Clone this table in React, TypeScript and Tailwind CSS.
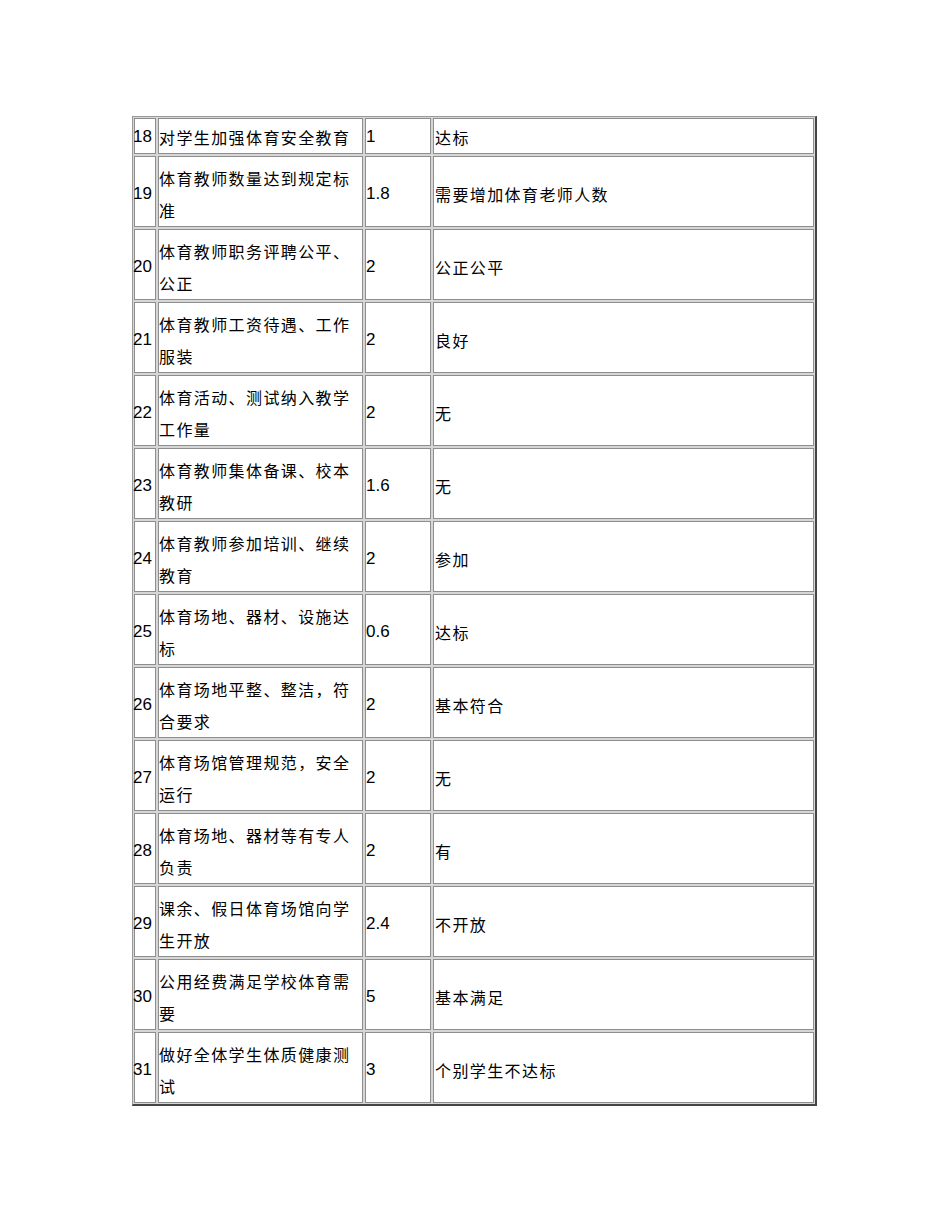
import React from "react";

type Row = { n: string; a: string[]; s: string; r: string };

const rows: Row[] = [
  { n: "18", a: ["对学生加强体育安全教育"], s: "1", r: "达标" },
  { n: "19", a: ["体育教师数量达到规定标", "准"], s: "1.8", r: "需要增加体育老师人数" },
  { n: "20", a: ["体育教师职务评聘公平、", "公正"], s: "2", r: "公正公平" },
  { n: "21", a: ["体育教师工资待遇、工作", "服装"], s: "2", r: "良好" },
  { n: "22", a: ["体育活动、测试纳入教学", "工作量"], s: "2", r: "无" },
  { n: "23", a: ["体育教师集体备课、校本", "教研"], s: "1.6", r: "无" },
  { n: "24", a: ["体育教师参加培训、继续", "教育"], s: "2", r: "参加" },
  { n: "25", a: ["体育场地、器材、设施达", "标"], s: "0.6", r: "达标" },
  { n: "26", a: ["体育场地平整、整洁，符", "合要求"], s: "2", r: "基本符合" },
  { n: "27", a: ["体育场馆管理规范，安全", "运行"], s: "2", r: "无" },
  { n: "28", a: ["体育场地、器材等有专人", "负责"], s: "2", r: "有" },
  { n: "29", a: ["课余、假日体育场馆向学", "生开放"], s: "2.4", r: "不开放" },
  { n: "30", a: ["公用经费满足学校体育需", "要"], s: "5", r: "基本满足" },
  { n: "31", a: ["做好全体学生体质健康测", "试"], s: "3", r: "个别学生不达标" },
];

const num = { fontFamily: '"Liberation Sans", Arial, sans-serif' };
const cjk = { fontFamily: '"Noto Sans CJK SC", "Noto Sans", sans-serif' };

export default function App() {
  return (
    <div className="w-[950px] min-h-[1230px] bg-white pt-[116px] pl-[132px] text-black">
      <div className="w-[685px] border-t border-l border-t-[#9a9a9a] border-l-[#9a9a9a] border-r-2 border-b-2 border-r-[#454545] border-b-[#454545] bg-[#d6d6d6] p-[1px]">
        <div className="grid grid-cols-[22px_205px_66px_381px] grid-rows-[36px_repeat(13,71px)] gap-[2px]">
          {rows.map((row, idx) => {
            const cell =
              "border border-[#8e8e8e] bg-white flex items-center " +
              (idx === 0 ? "pt-[2px]" : "pt-[5px]");
            return (
              <React.Fragment key={row.n}>
                <div className={cell + " text-[17px]"} style={num}>
                  <span className="-ml-[2px]">{row.n}</span>
                </div>
                <div className={cell + " text-[16px] tracking-[1.4px] leading-[32px]"} style={cjk}>
                  <div>
                    {row.a.map((l, i) => (
                      <div key={i} className="whitespace-nowrap">
                        {l}
                      </div>
                    ))}
                  </div>
                </div>
                <div className={cell + " text-[17px]"} style={num}>
                  {row.s}
                </div>
                <div className={cell + " pl-[1px] text-[16px] tracking-[1.4px]"} style={cjk}>
                  {row.r}
                </div>
              </React.Fragment>
            );
          })}
        </div>
      </div>
    </div>
  );
}
